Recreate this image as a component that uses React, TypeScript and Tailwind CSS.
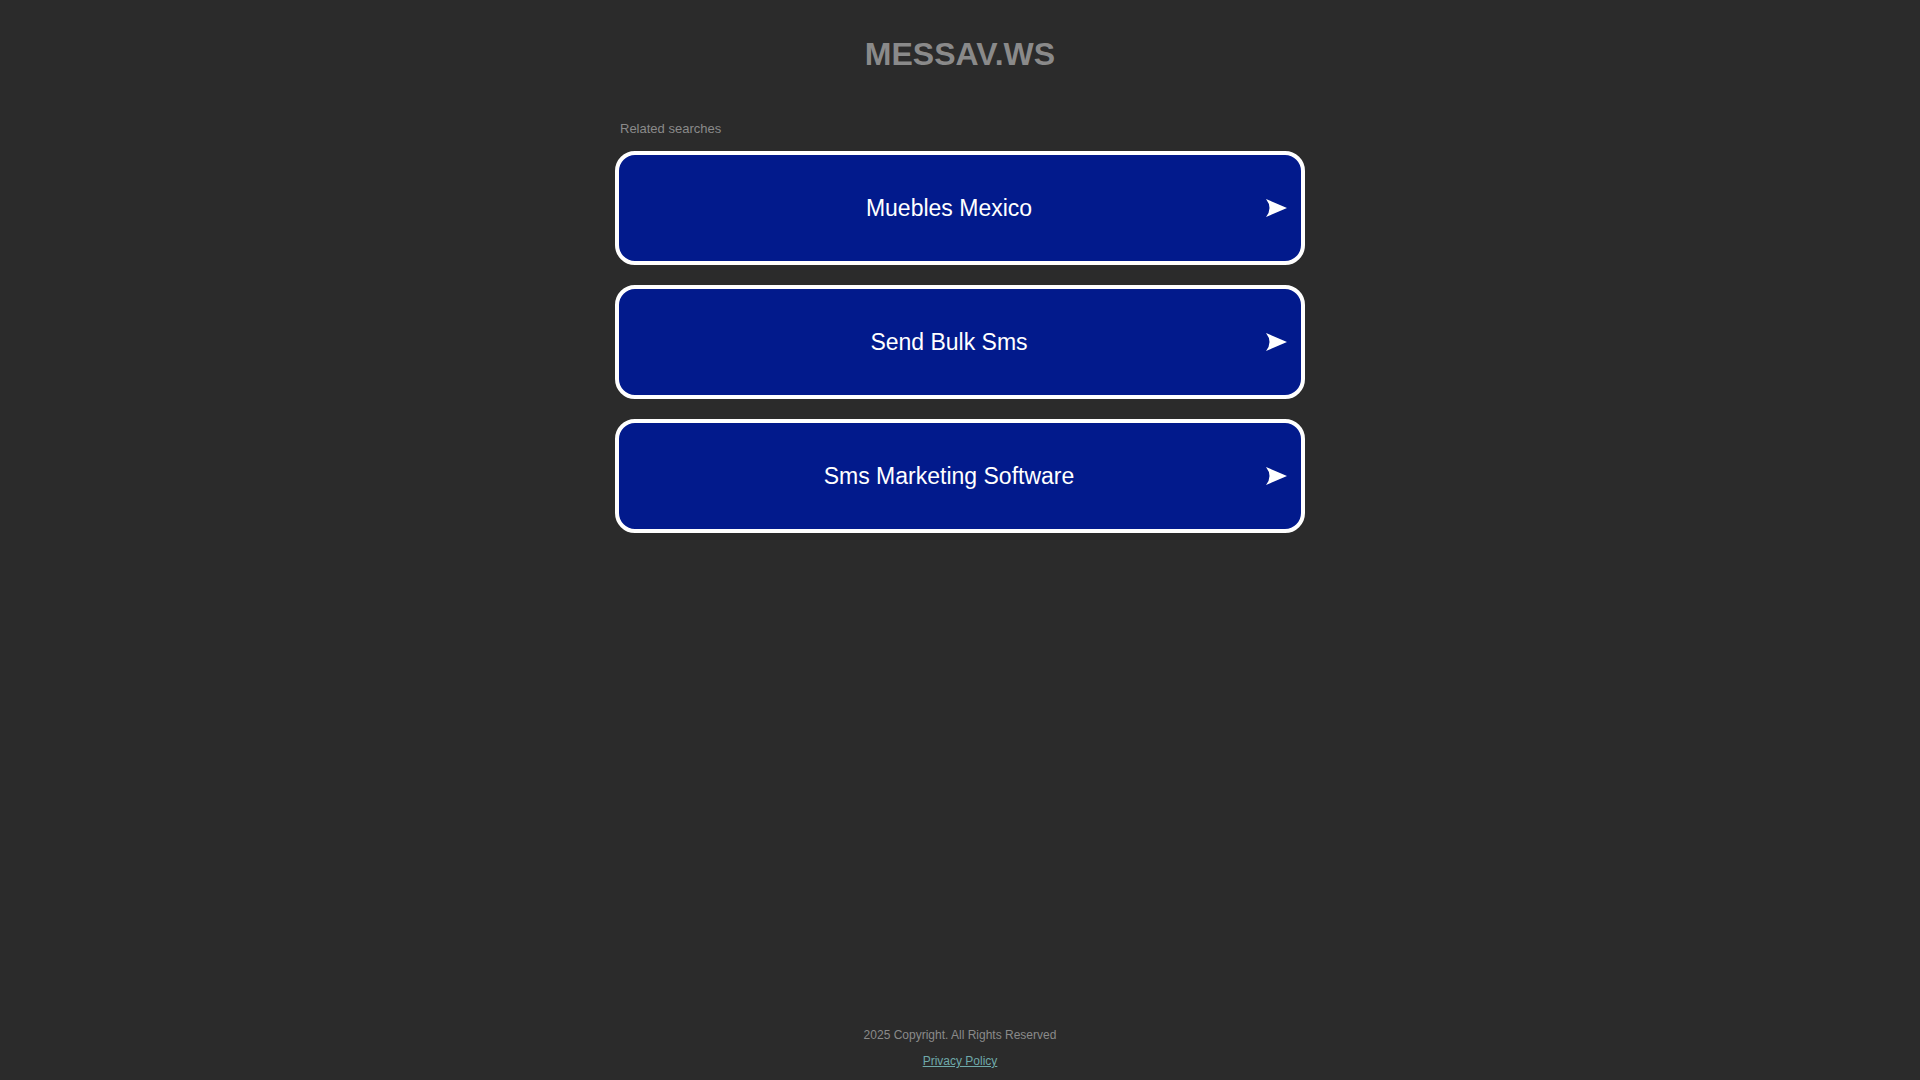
import React from "react";

const items = ["Muebles Mexico", "Send Bulk Sms", "Sms Marketing Software"];

function Arrow() {
  return (
    <svg width="21" height="18" viewBox="0 0 21 18" className="block">
      <path d="M0 0 L21 9 L0 18 Q7 9 0 0 Z" fill="#ffffff" />
    </svg>
  );
}

export default function App() {
  return (
    <div
      className="h-screen w-full bg-[#2b2b2b] flex flex-col items-center overflow-hidden"
      style={{ fontFamily: '"Liberation Sans", Arial, sans-serif' }}
    >
      <h1 className="mt-[38px] text-[32px] leading-[32px] font-bold text-[#8a8a8a] m-0">
        MESSAV.WS
      </h1>
      <div className="w-[690px] mt-[52px]">
        <div className="pl-[5px] text-[13px] leading-[13px] text-[#8a8a8a]">
          Related searches
        </div>
        <div className="mt-[16px] flex flex-col gap-[20.5px]">
          {items.map((t) => (
            <a
              key={t}
              href="#"
              className="relative h-[113.5px] rounded-[20px] border-4 border-white bg-[#021a8c] flex items-center justify-center pr-[22px] pt-[2px] no-underline"
            >
              <span className="text-[23px] leading-[23px] text-white">{t}</span>
              <span className="absolute right-[14px] top-1/2 -translate-y-1/2">
                <Arrow />
              </span>
            </a>
          ))}
        </div>
      </div>
      <footer className="mt-auto pb-[13px] flex flex-col items-center">
        <div className="text-[12px] leading-[12px] text-[#8a8a8a]">
          2025 Copyright. All Rights Reserved
        </div>
        <a
          href="#"
          className="mt-[14px] text-[12px] leading-[12px] text-[#6fa9aa] underline"
        >
          Privacy Policy
        </a>
      </footer>
    </div>
  );
}
